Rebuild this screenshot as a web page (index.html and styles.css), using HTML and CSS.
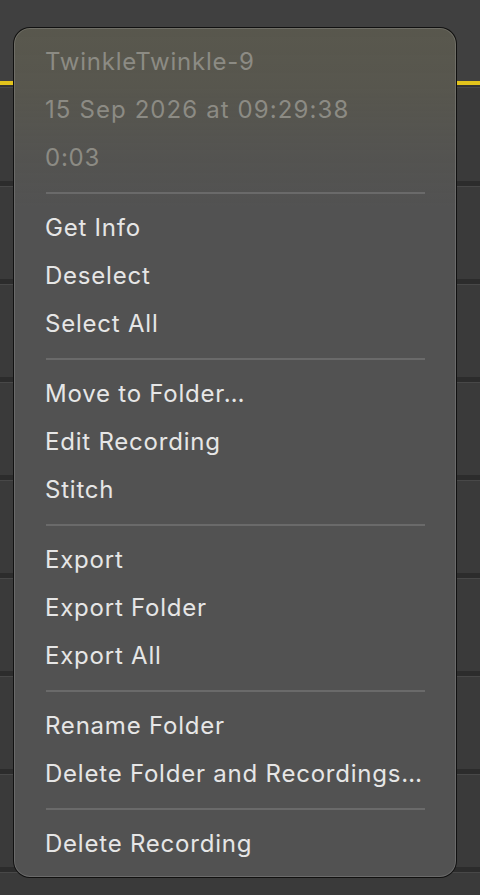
FILE: index.html
```html
<!DOCTYPE html>
<html lang="en">
<head>
<meta charset="utf-8">
<title>Context menu</title>
<link rel="stylesheet" href="styles.css">
</head>
<body>
<div class="screen">
  <div class="backdrop">
    <div class="top-area"></div>
    <div class="accent"></div>
    <div class="gap"></div>
    <div class="row first"></div>
    <div class="row"></div>
    <div class="row"></div>
    <div class="row"></div>
    <div class="row"></div>
    <div class="row"></div>
    <div class="row"></div>
    <div class="row"></div>
    <div class="row last"></div>
  </div>

  <div class="menu" role="menu">
    <div class="item header">TwinkleTwinkle-9</div>
    <div class="item header date">15 Sep 2026 at 09:29:38</div>
    <div class="item header">0:03</div>
    <div class="sep"></div>
    <div class="item">Get Info</div>
    <div class="item">Deselect</div>
    <div class="item">Select All</div>
    <div class="sep"></div>
    <div class="item">Move to Folder…</div>
    <div class="item">Edit Recording</div>
    <div class="item">Stitch</div>
    <div class="sep"></div>
    <div class="item">Export</div>
    <div class="item">Export Folder</div>
    <div class="item">Export All</div>
    <div class="sep"></div>
    <div class="item">Rename Folder</div>
    <div class="item">Delete Folder and Recordings…</div>
    <div class="sep"></div>
    <div class="item">Delete Recording</div>
  </div>
</div>
</body>
</html>
```

FILE: styles.css
```css
html, body {
  margin: 0;
  padding: 0;
  background: #3a3a3a;
}

.screen {
  position: relative;
  width: 480px;
  height: 895px;
  overflow: hidden;
  font-family: Inter, "Noto Sans", "Liberation Sans", sans-serif;
}

.backdrop {
  display: flex;
  flex-direction: column;
  height: 100%;
}

.top-area {
  height: 81px;
  background: #404040;
}

.accent {
  height: 4px;
  background: #e2c31c;
}

.gap {
  height: 2px;
  background: #333333;
}

.row {
  height: 92px;
  background: #3a3a3a;
  border-top: 1px solid #484848;
  border-bottom: 5px solid #2c2c2c;
  flex: none;
}

.row.first {
  height: 93px;
}

.row.last {
  flex: 1;
  border-bottom: none;
}

.menu {
  position: absolute;
  left: 13px;
  top: 27px;
  width: 442px;
  padding: 10px 0 9px;
  border: 1px solid rgba(10, 10, 10, 0.9);
  border-radius: 17px;
  background:
    linear-gradient(to bottom,
      rgba(112, 106, 60, 0.22) 0px,
      rgba(112, 106, 60, 0.18) 60px,
      rgba(112, 106, 60, 0.07) 120px,
      rgba(112, 106, 60, 0) 180px),
    #525252;
  box-shadow: inset 0 0 0 1px rgba(255, 255, 255, 0.14);
  display: flex;
  flex-direction: column;
}

.item {
  height: 48px;
  line-height: 48px;
  padding-left: 31px;
  font-size: 24px;
  color: #e6e6e6;
  white-space: nowrap;
  letter-spacing: 0.78px;
}

.item.header {
  color: #8c8b84;
}

.item.date {
  letter-spacing: 1.1px;
}

.sep {
  height: 2px;
  margin: 10px 31px 10px 32px;
  background: #6a6a6a;
}
```
